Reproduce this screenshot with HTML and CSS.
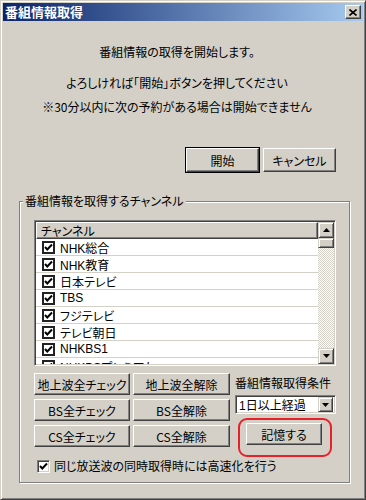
FILE: index.html
```html
<!DOCTYPE html>
<html lang="ja">
<head>
    <meta charset="UTF-8">
    <title>番組情報取得</title>
    <link rel="stylesheet" href="styles.css">
</head>
<body>
    <div class="window">
        <div class="titlebar">
            <span class="title">番組情報取得</span>
            <button class="close-btn">
                <svg width="8" height="7" viewBox="0 0 8 7"><path d="M0.5 0.5 L7.5 6.5 M7.5 0.5 L0.5 6.5" stroke="#000" stroke-width="1.6"/></svg>
            </button>
        </div>
        <div class="content">
            <div class="intro">
                <p class="msg-main">番組情報の取得を開始します。</p>
                <p class="msg-sub">よろしければ「開始」ボタンを押してください</p>
                <p class="msg-note">※30分以内に次の予約がある場合は開始できません</p>
            </div>
            <div class="actions">
                <button class="btn btn-default">開始</button>
                <button class="btn">キャンセル</button>
            </div>
            <fieldset class="group">
                <legend>番組情報を取得するチャンネル</legend>
                <div class="listbox">
                    <div class="list-main">
                        <div class="list-header">チャンネル</div>
                        <div class="list-rows">
                            <div class="list-row"><span class="list-check"><svg width="9" height="9" viewBox="0 0 9 9"><path d="M1 4 L3.3 6.5 L8 1.5" fill="none" stroke="#000" stroke-width="2"/></svg></span>NHK総合</div>
                            <div class="list-row"><span class="list-check"><svg width="9" height="9" viewBox="0 0 9 9"><path d="M1 4 L3.3 6.5 L8 1.5" fill="none" stroke="#000" stroke-width="2"/></svg></span>NHK教育</div>
                            <div class="list-row"><span class="list-check"><svg width="9" height="9" viewBox="0 0 9 9"><path d="M1 4 L3.3 6.5 L8 1.5" fill="none" stroke="#000" stroke-width="2"/></svg></span>日本テレビ</div>
                            <div class="list-row"><span class="list-check"><svg width="9" height="9" viewBox="0 0 9 9"><path d="M1 4 L3.3 6.5 L8 1.5" fill="none" stroke="#000" stroke-width="2"/></svg></span>TBS</div>
                            <div class="list-row"><span class="list-check"><svg width="9" height="9" viewBox="0 0 9 9"><path d="M1 4 L3.3 6.5 L8 1.5" fill="none" stroke="#000" stroke-width="2"/></svg></span>フジテレビ</div>
                            <div class="list-row"><span class="list-check"><svg width="9" height="9" viewBox="0 0 9 9"><path d="M1 4 L3.3 6.5 L8 1.5" fill="none" stroke="#000" stroke-width="2"/></svg></span>テレビ朝日</div>
                            <div class="list-row"><span class="list-check"><svg width="9" height="9" viewBox="0 0 9 9"><path d="M1 4 L3.3 6.5 L8 1.5" fill="none" stroke="#000" stroke-width="2"/></svg></span>NHKBS1</div>
                            <div class="list-row"><span class="list-check"><svg width="9" height="9" viewBox="0 0 9 9"><path d="M1 4 L3.3 6.5 L8 1.5" fill="none" stroke="#000" stroke-width="2"/></svg></span>NHKBSプレミアム</div>
                        </div>
                    </div>
                    <div class="scrollbar">
                        <div class="scroll-btn">
                            <svg width="7" height="4" viewBox="0 0 7 4"><path d="M3.5 0 L7 4 L0 4 Z" fill="#000"/></svg>
                        </div>
                        <div class="scroll-thumb"></div>
                        <div class="scroll-track"></div>
                        <div class="scroll-btn">
                            <svg width="7" height="4" viewBox="0 0 7 4"><path d="M0 0 L7 0 L3.5 4 Z" fill="#000"/></svg>
                        </div>
                    </div>
                </div>
                <div class="tools">
                    <div class="bulk">
                        <button class="btn">地上波全チェック</button>
                        <button class="btn">地上波全解除</button>
                        <button class="btn">BS全チェック</button>
                        <button class="btn">BS全解除</button>
                        <button class="btn">CS全チェック</button>
                        <button class="btn">CS全解除</button>
                    </div>
                    <div class="conditions">
                        <div class="cond-label">番組情報取得条件</div>
                        <div class="combo">
                            <span class="combo-value">1日以上経過</span>
                            <span class="combo-btn">
                                <svg width="7" height="4" viewBox="0 0 7 4"><path d="M0 0 L7 0 L3.5 4 Z" fill="#000"/></svg>
                            </span>
                        </div>
                        <div class="memo-wrap">
                            <button class="btn btn-memo">記憶する</button>
                        </div>
                    </div>
                </div>
                <label class="fast-check">
                    <span class="check-box"><svg width="9" height="9" viewBox="0 0 9 9"><path d="M1 4 L3.3 6.5 L8 1.5" fill="none" stroke="#000" stroke-width="2"/></svg></span>
                    同じ放送波の同時取得時には高速化を行う
                </label>
            </fieldset>
        </div>
    </div>
</body>
</html>
```

FILE: styles.css
```css
* {
    margin: 0;
    padding: 0;
    box-sizing: border-box;
}

body {
    background: #d4d0c8;
    font-family: "Noto Sans CJK JP", "Liberation Sans", sans-serif;
    font-size: 12px;
    font-feature-settings: "palt";
    color: #000;
}

.window {
    width: 366px;
    height: 500px;
    background: #d4d0c8;
    border: 1px solid;
    border-color: #d4d0c8 #404040 #404040 #d4d0c8;
    box-shadow: inset 1px 1px #fff, inset -1px -1px #808080;
    padding: 2px;
    display: flex;
    flex-direction: column;
}

.titlebar {
    height: 18px;
    background: linear-gradient(to right, #0a246a, #a6caf0);
    display: flex;
    align-items: center;
    justify-content: space-between;
    padding: 0 2px 0 2px;
}

.title {
    color: #fff;
    font-weight: bold;
    font-size: 13px;
    line-height: 18px;
    font-feature-settings: normal;
}

.close-btn {
    width: 16px;
    height: 14px;
    background: #d4d0c8;
    border: 1px solid;
    border-color: #fff #404040 #404040 #fff;
    box-shadow: inset -1px -1px #808080;
    display: flex;
    align-items: center;
    justify-content: center;
}

.content {
    flex: 1;
    display: flex;
    flex-direction: column;
}

.intro {
    padding: 23px 12px 0 0;
    text-align: center;
    line-height: 16px;
}

.msg-sub {
    margin-top: 15px;
}

.msg-note {
    margin-top: 8px;
}

.actions {
    display: flex;
    justify-content: flex-end;
    gap: 4px;
    padding-right: 27px;
    margin-top: 33px;
}

.btn {
    font-family: inherit;
    font-size: 12px;
    font-feature-settings: "palt";
    background: #d4d0c8;
    color: #000;
    border: 1px solid;
    border-color: #fff #404040 #404040 #fff;
    box-shadow: inset -1px -1px #808080;
    height: 22px;
}

.actions .btn {
    width: 73px;
    height: 24px;
}

.btn-default {
    outline: 1px solid #000;
}

.group {
    margin: 21px 0 0 16px;
    width: 331px;
    border: 1px solid #808080;
    box-shadow: inset 1px 1px #fff, 1px 1px #fff;
    padding: 11px 13px 8px 14px;
    min-width: 0;
}

.group legend {
    margin-left: -11px;
    padding: 0 2px;
    line-height: 16px;
    background: #d4d0c8;
}

.listbox {
    height: 146px;
    display: flex;
    border: 1px solid;
    border-color: #808080 #fff #fff #808080;
    box-shadow: inset 1px 1px #404040, inset -1px -1px #d4d0c8;
    padding: 1px;
    background: #fff;
}

.list-main {
    flex: 1;
    display: flex;
    flex-direction: column;
    overflow: hidden;
}

.list-header {
    height: 17px;
    line-height: 15px;
    padding-left: 4px;
    background: #d4d0c8;
    border: 1px solid;
    border-color: #fff #404040 #404040 #fff;
    box-shadow: inset -1px -1px #808080;
    flex-shrink: 0;
}

.list-rows {
    flex: 1;
    overflow: hidden;
}

.list-row {
    height: 17px;
    border-bottom: 1px solid #d4d0c8;
    display: flex;
    align-items: center;
    gap: 5px;
    padding-left: 6px;
    font-family: "Liberation Sans", "Noto Sans CJK JP", sans-serif;
}

.list-check {
    width: 13px;
    height: 13px;
    border: 2px solid #222;
    background: #fff;
    display: flex;
    align-items: center;
    justify-content: center;
}

.scrollbar {
    width: 16px;
    display: flex;
    flex-direction: column;
}

.scroll-btn {
    height: 16px;
    background: #d4d0c8;
    border: 1px solid;
    border-color: #d4d0c8 #404040 #404040 #d4d0c8;
    box-shadow: inset 1px 1px #fff, inset -1px -1px #808080;
    display: flex;
    align-items: center;
    justify-content: center;
}

.scroll-thumb {
    height: 10px;
    background: #d4d0c8;
    border: 1px solid;
    border-color: #d4d0c8 #404040 #404040 #d4d0c8;
    box-shadow: inset 1px 1px #fff, inset -1px -1px #808080;
}

.scroll-track {
    flex: 1;
    background: conic-gradient(#fff 25%, #d4d0c8 0 50%, #fff 0 75%, #d4d0c8 0) 0 0 / 2px 2px;
}

.tools {
    display: flex;
    gap: 5px;
    margin-top: 7px;
}

.bulk {
    display: grid;
    grid-template-columns: 96px 97px;
    grid-auto-rows: 22px;
    gap: 4px 3px;
}

.conditions {
    flex: 1;
    display: flex;
    flex-direction: column;
}

.cond-label {
    height: 20px;
    line-height: 20px;
}

.combo {
    margin-top: 2px;
    height: 19px;
    display: flex;
    align-items: center;
    background: #fff;
    border: 1px solid;
    border-color: #808080 #fff #fff #808080;
    box-shadow: inset 1px 1px #404040, inset -1px -1px #d4d0c8;
    padding: 1px 2px 1px 3px;
}

.combo-value {
    flex: 1;
    font-family: "Liberation Sans", "Noto Sans CJK JP", sans-serif;
}

.combo-btn {
    width: 15px;
    height: 15px;
    background: #d4d0c8;
    border: 1px solid;
    border-color: #d4d0c8 #404040 #404040 #d4d0c8;
    box-shadow: inset 1px 1px #fff, inset -1px -1px #808080;
    display: flex;
    align-items: center;
    justify-content: center;
}

.memo-wrap {
    margin-top: 9px;
    padding-left: 11px;
    position: relative;
}

.memo-wrap::after {
    content: "";
    position: absolute;
    left: 3px;
    top: -5px;
    width: 90px;
    height: 35px;
    border: 2px solid #e8202a;
    border-radius: 9px;
}

.btn-memo {
    width: 76px;
    height: 22px;
}

.fast-check {
    display: flex;
    align-items: center;
    gap: 4px;
    margin-top: 11px;
    padding-left: 3px;
    line-height: 16px;
}

.check-box {
    width: 13px;
    height: 13px;
    background: #fff;
    border: 1px solid;
    border-color: #808080 #fff #fff #808080;
    box-shadow: inset 1px 1px #404040, inset -1px -1px #d4d0c8;
    display: flex;
    align-items: center;
    justify-content: center;
}
```
